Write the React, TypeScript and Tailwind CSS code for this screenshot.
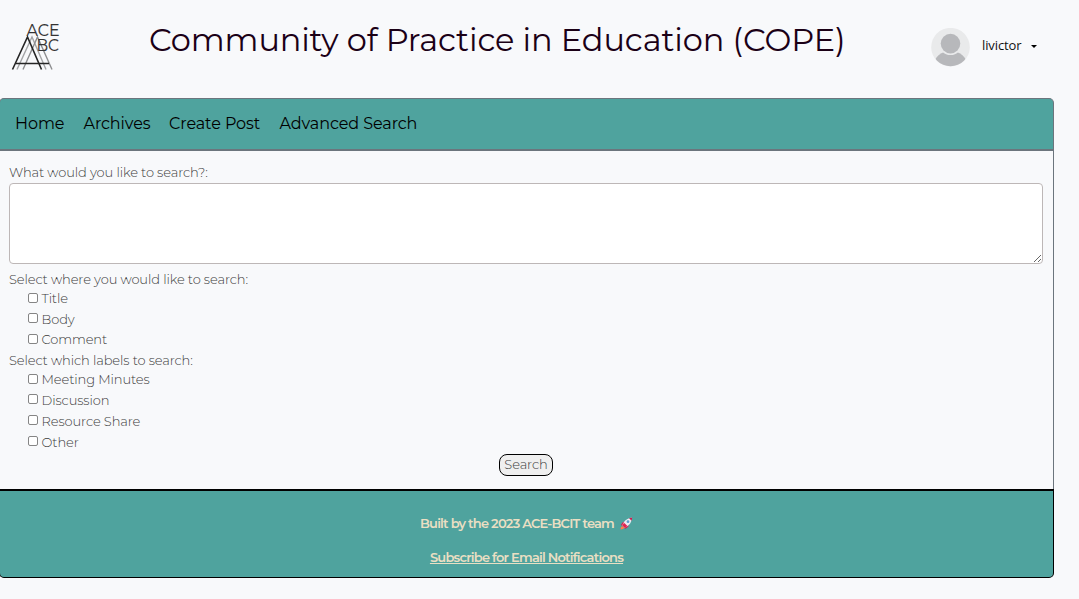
const navLinks = [
  { label: "Home", width: "w-[68.5px]" },
  { label: "Archives", width: "w-[85.5px]" },
  { label: "Create Post", width: "w-[110.5px]" },
  { label: "Advanced Search", width: "w-[140px]" },
];

function Logo() {
  return (
    <svg className="block h-[52px] w-[52px]" viewBox="0 0 52 52" fill="none">
      <g stroke="#a3a4a6" strokeWidth="1.4">
        <path d="M6 48.5 L21 16 L35 48.5" />
        <path d="M12 48.5 L26.5 16 L41 48.5" stroke="#8d8e90" />
      </g>
      <path d="M1.5 48.5 L16.5 16 L30.5 48.5" stroke="#252525" strokeWidth="1.6" />
      <path d="M4.5 42.5 H38" stroke="#252525" strokeWidth="1.4" />
      <g fill="#333" stroke="#333" strokeWidth="0.15" fontFamily="Montserrat, Inter, sans-serif" fontSize="16">
        <text x="15.5" y="14.5" textLength="33" lengthAdjust="spacingAndGlyphs">ACE</text>
        <text x="25.5" y="29.5" textLength="22.5" lengthAdjust="spacingAndGlyphs">BC</text>
      </g>
    </svg>
  );
}

function Avatar() {
  return (
    <svg className="block size-[39px]" viewBox="0 0 39 39">
      <clipPath id="avatar-circle">
        <circle cx="19.5" cy="19.2" r="19" />
      </clipPath>
      <circle cx="19.5" cy="19.2" r="19.3" fill="#e9eaeb" />
      <g clipPath="url(#avatar-circle)">
        <ellipse cx="19.5" cy="37" rx="16.5" ry="14" fill="#b7b8bb" />
        <circle cx="19.5" cy="15.6" r="11.5" fill="#e9eaeb" />
        <circle cx="19.5" cy="15.6" r="9.8" fill="#b7b8bb" />
      </g>
    </svg>
  );
}

function Rocket() {
  return (
    <svg className="inline-block size-[13px]" viewBox="0 0 13 13">
      <path d="M.5 12.5 L1 9.8 L3.2 9.2 L4.6 10.8 L3 12 Z" fill="#ff7e4d" />
      <path d="M.8 8 L3 5 L5.5 4.8 L2.5 8.8Z M5 12 L8.3 9.8 L8.6 7 L4.5 10Z" fill="#d3194e" />
      <path d="M2.3 8.6 C4 3.6 7 1.6 11.9 .6 C11.6 5.5 9.5 8.7 4.6 10.8 Z" fill="#eceaf2" />
      <path d="M2.3 8.6 L4 5.8 L7.5 9.1 L4.6 10.8 Z" fill="#e0244f" />
      <path d="M9 1.3 L12.2 .4 L11.6 3.8 Z" fill="#c91d50" />
      <circle cx="8" cy="4.7" r="1.4" fill="#5b9ccf" />
    </svg>
  );
}

function CheckRow({ label, height }: { label: string; height: string }) {
  return (
    <label className={`flex items-center pl-[28px] ${height}`}>
      <input
        type="checkbox"
        className="mb-[1px] mr-[3.5px] size-[10px] shrink-0 appearance-none rounded-[2px] border border-[#858585] bg-white"
      />
      <span>{label}</span>
    </label>
  );
}

export default function App() {
  return (
    <div className="h-[599px] w-full overflow-hidden bg-[#f8f9fb] font-[Montserrat,Inter,sans-serif] text-black">
      <header className="flex h-[98px] pl-[11px]">
        <div className="w-[138px] pt-[21px]">
          <Logo />
        </div>
        <h1 className="w-[782px] pt-[16px] text-[32px] leading-[48px] tracking-[-0.12px] whitespace-nowrap text-[#1b0016]">
          Community of Practice in Education (COPE)
        </h1>
        <div className="flex items-start pt-[28px]">
          <Avatar />
          <span className="mt-[8px] ml-[12px] font-['Open_Sans',sans-serif] text-[13px] leading-[18px] tracking-[-0.1px] text-[#111]">livictor</span>
          <span className="mt-[17px] ml-[9px] size-0 border-x-[3px] border-t-[3px] border-x-transparent border-t-black" />
        </div>
      </header>

      <div className="-ml-px w-[1055px]">
        <nav className="flex h-[53px] rounded-t-[5px] border border-b-2 border-[#6c757d] bg-[#4fa39e] pl-[15px] text-[16px] leading-[49px] tracking-[-0.08px] whitespace-nowrap">
          {navLinks.map((link) => (
            <a key={link.label} className={link.width}>
              {link.label}
            </a>
          ))}
        </nav>

        <main className="h-[338px] border-r border-[#6c757d] pt-[11px] text-[13px] font-light leading-[20px] tracking-[-0.1px] text-[#3c3c3c]">
          <label className="block pl-[10px]">What would you like to search?:</label>
          <textarea className="mt-px ml-[10px] block h-[81px] w-[1034px] resize rounded-[4px] border border-[#bdb7b7] bg-white" />
          <div className="mt-[5px] pl-[10px]">Select where you would like to search:</div>
          <div className="-mt-px pl-px">
            <CheckRow label="Title" height="h-[20px]" />
            <CheckRow label="Body" height="h-[21px]" />
            <CheckRow label="Comment" height="h-[20px]" />
          </div>
          <div className="mt-px pl-[10px]">Select which labels to search:</div>
          <div className="-mt-px pl-px">
            <CheckRow label="Meeting Minutes" height="h-[20px]" />
            <CheckRow label="Discussion" height="h-[21px]" />
            <CheckRow label="Resource Share" height="h-[21px]" />
            <CheckRow label="Other" height="h-[21px]" />
          </div>
          <div className="flex justify-center pt-[2px]">
            <button className="h-[22px] w-[54px] rounded-[8px] border border-b-[1.5px] border-black bg-[#efefef] pb-[2px] text-center leading-[18px]">
              Search
            </button>
          </div>
        </main>

        <footer className="flex h-[89px] flex-col items-center rounded-b-[5px] border border-t-2 border-black bg-[#4fa39e] pt-[22px] text-[13px] font-semibold leading-[20px] tracking-[-0.78px] text-[#eadfc3]">
          <div className="flex items-center gap-[6px]">
            <span>Built by the 2023 ACE-BCIT team</span>
            <Rocket />
          </div>
          <a className="mt-[14px] underline">Subscribe for Email Notifications</a>
        </footer>
      </div>
    </div>
  );
}
